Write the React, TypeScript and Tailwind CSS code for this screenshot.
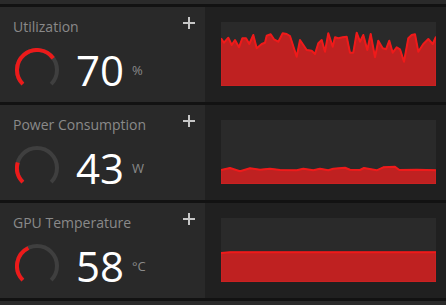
const rows = [
  {
    title: "Utilization",
    value: "70",
    unit: "%",
    frac: 0.7,
    pts: [
      [0, 16.3], [3, 20.7], [7.3, 15.7], [10.7, 23], [14, 18], [18, 25.3], [21.3, 16.3], [25, 16.3],
      [28.3, 22], [32.3, 13], [35.7, 26.3], [40.7, 22], [44, 20.7], [45.7, 13.7], [49.7, 12.3],
      [53, 17.3], [57.3, 19.7], [61.7, 11.3], [65.7, 12], [69, 14], [75.7, 34.7], [79, 18],
      [85.7, 28], [90.7, 28.7], [94, 32], [97.3, 21.3], [100.7, 18], [104, 29.7], [107.3, 11.3],
      [111.7, 24.7], [114, 15.3], [117.3, 16.3], [121.7, 15.3], [125.7, 14.7], [129, 30.7],
      [132.3, 30.7], [135.7, 10.7], [139, 19.7], [142.3, 13], [146.3, 28], [149.7, 12], [154, 35.3],
      [157.3, 18.7], [161.7, 26.3], [165, 27.3], [168.3, 18.7], [171.7, 30.7], [175.7, 25.3],
      [179, 27.3], [183, 39.7], [187.3, 16.3], [190.7, 13], [194, 12.3], [197.3, 29.7], [202.3, 22],
      [207.3, 17], [211.7, 22], [215, 14.7],
    ],
  },
  {
    title: "Power Consumption",
    value: "43",
    unit: "W",
    frac: 0.225,
    pts: [
      [0, 50], [9, 48], [19, 51.3], [29, 48.3], [39, 49.7], [49, 48.7], [59, 50], [75.7, 50.3],
      [82.3, 48.7], [92.3, 50.3], [99, 48.7], [107.3, 50.3], [112.3, 48.7], [124, 47.7], [129, 49.7],
      [139, 50], [143, 48], [155.7, 50.3], [162.3, 47.3], [174, 46.7], [178.3, 50], [195.7, 49.7],
      [205.7, 50], [215, 50.3],
    ],
  },
  {
    title: "GPU Temperature",
    value: "58",
    unit: "°C",
    frac: 0.405,
    pts: [[0, 35], [9, 34.2], [120, 34.2], [215, 34.2]],
  },
]

function pt(deg: number) {
  const a = (deg * Math.PI) / 180
  return [22 + 20 * Math.sin(a), 22 - 20 * Math.cos(a)]
}

function arc(from: number, to: number) {
  const [x1, y1] = pt(from)
  const [x2, y2] = pt(to)
  const large = to - from > 180 ? 1 : 0
  return `M${x1} ${y1} A20 20 0 ${large} 1 ${x2} ${y2}`
}

function Gauge({ frac }: { frac: number }) {
  return (
    <svg width="44" height="44" viewBox="0 0 44 44" className="block shrink-0">
      <path d={arc(-135, 135)} fill="none" stroke="#3f3f3f" strokeWidth="4" />
      <path d={arc(-135, -135 + 270 * frac)} fill="none" stroke="#ec1a1a" strokeWidth="4" />
    </svg>
  )
}

function Plus() {
  return (
    <svg width="12" height="12" viewBox="0 0 12 12" className="block shrink-0">
      <path d="M6 0V12M0 6H12" stroke="#c6c6c6" strokeWidth="2" />
    </svg>
  )
}

function Chart({ pts }: { pts: number[][] }) {
  const line = pts.map(([x, y]) => `${x},${y}`).join(" ")
  return (
    <svg width="215" height="64" viewBox="0 0 215 64" preserveAspectRatio="none" className="block bg-[#2a2a2a]">
      <polygon points={`0,64 ${line} 215,64`} fill="#bf2121" stroke="#d42222" strokeWidth="1" />
      <polyline points={line} fill="none" stroke="#ef1a1a" strokeWidth="2" strokeLinejoin="round" />
    </svg>
  )
}

export default function App() {
  return (
    <div className="min-h-screen bg-[#2a2a2a] pt-[4px] font-['Open_Sans','Noto_Sans',sans-serif]">
      {rows.map((r) => (
        <div key={r.title} className="flex h-[98px] border-t-[3px] border-[#121212]">
          <div className="w-[205px] bg-[#292929] pl-[13px] pr-[10px] pt-[10px]">
            <div className="flex items-start justify-between">
              <span className="mt-[1px] text-[14px] leading-[18px] text-[#8a8a8a]">{r.title}</span>
              <Plus />
            </div>
            <div className="mt-[12px] flex items-center">
              <div className="ml-[2px]">
                <Gauge frac={r.frac} />
              </div>
              <span className="ml-[17px] w-[48px] text-[42px] leading-none text-white">{r.value}</span>
              <span className="ml-[8px] text-[13px] leading-none text-[#8a8a8a]">{r.unit}</span>
            </div>
          </div>
          <div className="flex-1 bg-[#202020] pl-[16px] pt-[15px]">
            <Chart pts={r.pts} />
          </div>
        </div>
      ))}
      <div className="h-[3px] bg-[#121212]" />
    </div>
  )
}
